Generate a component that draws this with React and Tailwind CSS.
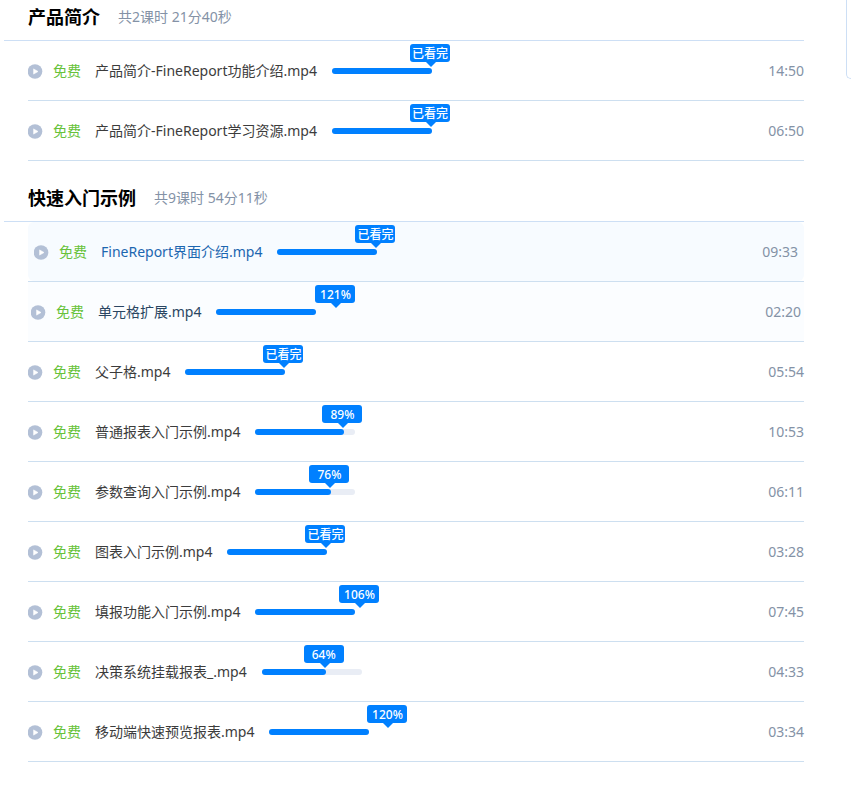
// src/App.jsx
const chapters = [
    {
        title: '产品简介',
        summary: '共2课时 21分40秒',
        lessons: [
            { name: '产品简介-FineReport功能介绍.mp4', progress: 100, time: '14:50' },
            { name: '产品简介-FineReport学习资源.mp4', progress: 100, time: '06:50' },
        ],
    },
    {
        title: '快速入门示例',
        summary: '共9课时 54分11秒',
        lessons: [
            { name: 'FineReport界面介绍.mp4', progress: 100, time: '09:33', state: 'active' },
            { name: '单元格扩展.mp4', progress: 121, time: '02:20', state: 'leaving' },
            { name: '父子格.mp4', progress: 100, time: '05:54' },
            { name: '普通报表入门示例.mp4', progress: 89, time: '10:53' },
            { name: '参数查询入门示例.mp4', progress: 76, time: '06:11' },
            { name: '图表入门示例.mp4', progress: 100, time: '03:28' },
            { name: '填报功能入门示例.mp4', progress: 106, time: '07:45' },
            { name: '决策系统挂载报表_.mp4', progress: 64, time: '04:33' },
            { name: '移动端快速预览报表.mp4', progress: 120, time: '03:34' },
        ],
    },
];

const rowStyles = {
    normal: 'text-[#3c3c3c]',
    leaving: 'px-[3px] bg-[#fbfdff] text-[#2a4662]',
    active: 'px-1.5 bg-[#f7fbff] rounded-md text-[#1c66b0]',
};

function PlayIcon() {
    return (
        <svg viewBox="0 0 15 15" className="size-[15px] shrink-0 mt-0.5" aria-hidden="true">
            <circle cx="7" cy="7.5" r="7.3" fill="#b3c0d6" />
            <path d="M5.6 4.9v5.2L10 7.5z" fill="#fff" stroke="#fff" strokeWidth="0.6" strokeLinejoin="round" />
        </svg>
    );
}

function Progress({ value }) {
    return (
        <div
            role="progressbar"
            aria-label="学习进度"
            aria-valuenow={value}
            className="relative ml-[15px] w-[100px] h-1.5 shrink-0 rounded-full bg-[#e9edf5]"
        >
            <div className="h-full rounded-full bg-[#0080ff]" style={{ width: `${Math.min(value, 100)}%` }} />
            {/* the bubble follows the real value, even past the end of the bar */}
            <div className="absolute bottom-full mb-1.5 w-0" style={{ left: `${value}%` }}>
                <div className="relative -ml-[22px] w-10 h-[18px] rounded-[3px] bg-[#0080ff] text-white text-xs font-medium leading-5 text-center whitespace-nowrap">
                    {value === 100 ? '已看完' : `${value}%`}
                    <span className="absolute top-full left-4 border-x-[5px] border-t-[5px] border-x-transparent border-t-[#0080ff]" />
                </div>
            </div>
        </div>
    );
}

function Lesson({ lesson }) {
    return (
        <li className="border-b border-[#cddff0]">
            <div className={`flex items-center h-[59px] ${rowStyles[lesson.state || 'normal']}`}>
                <PlayIcon />
                <span className="ml-2.5 text-[#67c23a]">免费</span>
                <a href="#" className="ml-3.5 whitespace-nowrap">{lesson.name}</a>
                <Progress value={lesson.progress} />
                <span className="ml-auto text-[#8492a6]">{lesson.time}</span>
            </div>
        </li>
    );
}

export default function App() {
    return (
        <div className="flex items-start bg-white text-sm font-['Noto_Sans','Noto_Sans_CJK_SC',sans-serif]">
            <main className="flex-1 ml-1 mr-[42px]">
                {chapters.map((chapter) => (
                    <section key={chapter.title} className="mb-5">
                        <header className="flex items-center h-[41px] pl-6 pb-1.5 border-b border-[#cddff5]">
                            <h2 className="text-lg font-bold text-black">{chapter.title}</h2>
                            <span className="ml-[18px] text-[#8492a6]">{chapter.summary}</span>
                        </header>
                        <ul className="pl-6">
                            {chapter.lessons.map((lesson) => (
                                <Lesson key={lesson.name} lesson={lesson} />
                            ))}
                        </ul>
                    </section>
                ))}
            </main>
            <aside className="w-[5px] h-[79px] border-l border-b border-[#cddff5] rounded-bl-md" />
        </div>
    );
}
